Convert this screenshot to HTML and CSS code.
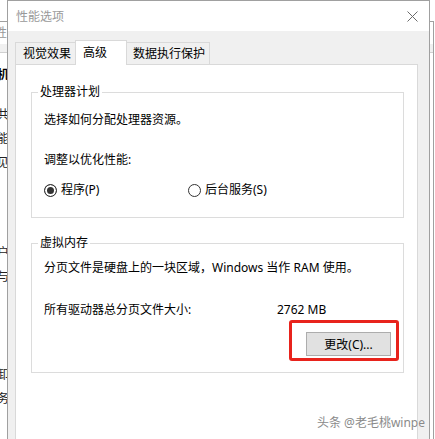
FILE: index.html
```html
<!DOCTYPE html>
<html lang="zh-CN">
<head>
    <meta charset="UTF-8">
    <meta name="viewport" content="width=device-width, initial-scale=1.0">
    <title>性能选项</title>
    <link rel="stylesheet" href="styles.css">
</head>
<body>
    <div class="desktop">
        <!-- 后面的系统属性窗口 -->
        <div class="back-window">
            <div class="back-title">系统属性</div>
            <div class="back-tabs"></div>
            <div class="back-group first"><span class="strong">机</span></div>
            <div class="back-group second">共<br>能<br>见</div>
            <div class="back-group third">户<br>与</div>
            <div class="back-group fourth">卸<br>务</div>
        </div>

        <!-- 性能选项对话框 -->
        <div class="dialog">
            <div class="titlebar">
                <span class="title">性能选项</span>
                <svg class="close" width="11" height="11" viewBox="0 0 11 11">
                    <path d="M0.5 0.5 L10.5 10.5 M10.5 0.5 L0.5 10.5" stroke="#6b6b6b" stroke-width="1" fill="none"/>
                </svg>
            </div>
            <div class="dialog-body">
                <div class="tabs">
                    <div class="tab first">视觉效果</div>
                    <div class="tab active">高级</div>
                    <div class="tab last">数据执行保护</div>
                </div>
                <div class="panel">
                    <fieldset class="group cpu">
                        <legend>处理器计划</legend>
                        <p class="hint">选择如何分配处理器资源。</p>
                        <p class="caption">调整以优化性能:</p>
                        <div class="radios">
                            <label class="radio wide"><span class="dot checked"></span>程序(P)</label>
                            <label class="radio"><span class="dot"></span>后台服务(S)</label>
                        </div>
                    </fieldset>
                    <fieldset class="group memory">
                        <legend>虚拟内存</legend>
                        <p class="hint">分页文件是硬盘上的一块区域，Windows 当作 RAM 使用。</p>
                        <div class="size-row">
                            <span>所有驱动器总分页文件大小:</span>
                            <span>2762 MB</span>
                        </div>
                        <div class="button-row">
                            <div class="button-wrap">
                                <button class="btn">更改(C)...</button>
                                <span class="mark"></span>
                            </div>
                        </div>
                    </fieldset>
                </div>
            </div>
        </div>

        <div class="watermark">头条 @老毛桃winpe</div>
    </div>
</body>
</html>
```

FILE: styles.css
```css
/* pamata iestatījumi */
body {
    margin: 0;
    font-family: "Noto Sans", "Noto Sans CJK SC", sans-serif;
    font-size: 12px;
    color: #000;
    background: #fff;
}
.desktop {
    position: relative;
    width: 435px;
    height: 439px;
    overflow: hidden;
    background: #fff;
}

/* fona logs */
.back-window {
    position: absolute;
    left: -60px;
    top: 21px;
    width: 492px;
    height: 500px;
    border: 1px solid #a0a0a0;
    background: #fff;
    color: #222;
}
.back-title {
    height: 22px;
    line-height: 22px;
    padding-left: 18px;
    color: #999;
}
.back-tabs {
    height: 8px;
    border-bottom: 1px solid #d0d0d0;
    background: #f0f0f0;
}
.back-group {
    padding-left: 56px;
    line-height: 24px;
}
.back-group.first { margin-top: 10px; }
.back-group.second { margin-top: 16px; }
.back-group.third { margin-top: 66px; }
.back-group.fourth { margin-top: 74px; }
.strong { color: #000; font-weight: bold; }

/* dialoga logs */
.dialog {
    position: absolute;
    left: 7px;
    top: 0;
    width: 421px;
    height: 460px;
    border: 1px solid #a0a0a0;
    background: #f0f0f0;
}
.titlebar {
    display: flex;
    align-items: center;
    justify-content: space-between;
    height: 30px;
    padding: 0 11px 0 8px;
    background: #fff;
}
.title { color: #999; }
.close { display: block; }
.dialog-body {
    padding: 9px 11px 0 7px;
}

/* cilnes */
.tabs {
    display: flex;
    align-items: flex-end;
    height: 25px;
}
.tab {
    height: 22px;
    line-height: 22px;
    margin-bottom: 1px;
    border: 1px solid #d9d9d9;
    border-bottom: none;
    background: #f0f0f0;
    box-sizing: border-box;
}
.tab.first { padding: 0 4px 0 7px; }
.tab.active {
    position: relative;
    z-index: 1;
    height: 25px;
    line-height: 23px;
    margin: 0 0 0 -1px;
    padding: 0 19px 0 7px;
    background: #fff;
}
.tab.last {
    margin-left: -2px;
    padding: 0 4px 0 7px;
}
.panel {
    margin-top: -1px;
    min-height: 400px;
    padding: 0 13px 0 15px;
    border: 1px solid #d9d9d9;
    background: #fff;
}

/* grupas */
.group {
    margin: 0;
    padding: 0 12px 19px 12px;
    border: 1px solid #dcdcdc;
    min-width: 0;
}
.group.cpu { margin-top: 19px; }
.group.memory { margin-top: 17px; padding-bottom: 16px; }
legend {
    margin-left: -6px;
    padding: 0 2px;
    line-height: 16px;
}
p {
    margin: 0;
    line-height: 16px;
}
.hint { margin-top: 12px; }
.memory .hint { margin-top: 9px; }
.caption { margin-top: 24px; }

.radios {
    display: flex;
    margin-top: 14px;
    line-height: 16px;
}
.radio {
    display: flex;
    align-items: center;
    gap: 4px;
}
.radio.wide { width: 144px; }
.dot {
    width: 13px;
    height: 13px;
    box-sizing: border-box;
    border: 1px solid #333;
    border-radius: 50%;
}
.dot.checked {
    background: #333;
    box-shadow: inset 0 0 0 2px #fff;
}

.size-row {
    display: grid;
    grid-template-columns: 233px auto;
    margin-top: 26px;
    line-height: 16px;
}
.button-row {
    display: flex;
    justify-content: flex-end;
    margin-top: 14px;
}
.button-wrap { position: relative; }
.btn {
    display: block;
    width: 85px;
    height: 24px;
    padding: 0;
    border: 1px solid #adadad;
    background: #e1e1e1;
    font: inherit;
    color: #000;
}
/* sarkanais izcēlums ap pogu */
.mark {
    position: absolute;
    left: -17px;
    top: -12px;
    right: -8px;
    bottom: -5px;
    border: 3px solid #e8231c;
    border-radius: 3px;
}

.watermark {
    position: absolute;
    right: 10px;
    top: 415px;
    line-height: 16px;
    color: #8a8a8a;
    text-shadow: 0 0 1px #fff;
}
```
